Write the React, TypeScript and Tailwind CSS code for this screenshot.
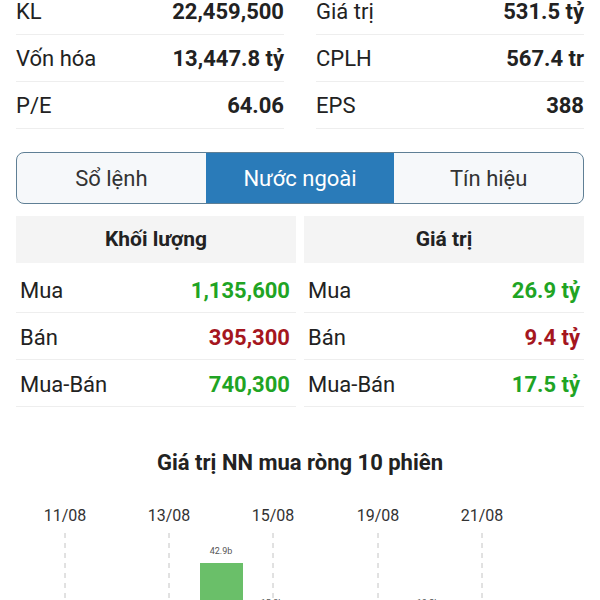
import React from "react";

const stats = [
  ["KL", "22,459,500", "Giá trị", "531.5 tỷ"],
  ["Vốn hóa", "13,447.8 tỷ", "CPLH", "567.4 tr"],
  ["P/E", "64.06", "EPS", "388"],
];

const volRows = [
  { label: "Mua", value: "1,135,600", color: "text-[#1fa424]" },
  { label: "Bán", value: "395,300", color: "text-[#a5161e]" },
  { label: "Mua-Bán", value: "740,300", color: "text-[#1fa424]" },
];

const valRows = [
  { label: "Mua", value: "26.9 tỷ", color: "text-[#1fa424]" },
  { label: "Bán", value: "9.4 tỷ", color: "text-[#a5161e]" },
  { label: "Mua-Bán", value: "17.5 tỷ", color: "text-[#1fa424]" },
];

const StatCell = ({ label, value }: { label: string; value: string }) => (
  <div className="flex h-[47px] items-center justify-between border-b border-[#eeeeee] pt-[2px]">
    <span className="text-[22px] leading-none text-[#222]">{label}</span>
    <span className="text-[22px] font-bold leading-none text-[#222]">{value}</span>
  </div>
);

const ForeignTable = ({
  title,
  rows,
  pr,
}: {
  title: string;
  rows: { label: string; value: string; color: string }[];
  pr: string;
}) => (
  <div className="flex-1">
    <div className="flex h-[47px] items-center justify-center bg-[#f4f4f4] text-[21px] font-bold text-[#222]">
      {title}
    </div>
    <div className="mt-[3px]">
      {rows.map((r) => (
        <div
          key={r.label}
          className={`flex h-[47px] items-center justify-between border-b border-[#eeeeee] pl-1 pt-[4px] ${pr}`}
        >
          <span className="text-[22px] leading-none text-[#222]">{r.label}</span>
          <span className={`text-[22px] font-bold leading-none ${r.color}`}>{r.value}</span>
        </div>
      ))}
    </div>
  </div>
);

const dates = [
  { x: 65, t: "11/08" },
  { x: 169, t: "13/08" },
  { x: 273, t: "15/08" },
  { x: 378, t: "19/08" },
  { x: 482, t: "21/08" },
];

const Chart = () => (
  <svg width="600" height="110" className="block">
    {dates.map((d) => (
      <g key={d.t}>
        <text
          x={d.x}
          y={24}
          textAnchor="middle"
          fontSize="16"
          fill="#333"
          fontFamily="Roboto, sans-serif"
        >
          {d.t}
        </text>
        <line
          x1={d.x}
          y1={36}
          x2={d.x}
          y2={110}
          stroke="#c4c4c4"
          strokeWidth="1"
          strokeDasharray="5 5"
        />
      </g>
    ))}
    <text x={221} y={57} textAnchor="middle" fontSize="9" fill="#555" fontFamily="Roboto, sans-serif">
      42.9b
    </text>
    <rect x={200} y={66} width={43} height={60} fill="#6abf69" />
    <text x={272} y={109} textAnchor="middle" fontSize="9" fill="#555" fontFamily="Roboto, sans-serif">
      15.3b
    </text>
    <text x={428} y={109} textAnchor="middle" fontSize="9" fill="#555" fontFamily="Roboto, sans-serif">
      10.2b
    </text>
  </svg>
);

export default function App() {
  return (
    <div className="h-[600px] w-[600px] overflow-hidden bg-white font-['Roboto',sans-serif]">
      <div className="-mt-[12px]">
        <div className="flex gap-8 px-4">
          <div className="flex-1">
            {stats.map((s) => (
              <StatCell key={s[0]} label={s[0]} value={s[1]} />
            ))}
          </div>
          <div className="flex-1">
            {stats.map((s) => (
              <StatCell key={s[2]} label={s[2]} value={s[3]} />
            ))}
          </div>
        </div>

        <div className="mx-4 mt-[23px] flex h-[52px] overflow-hidden rounded-lg border border-[#5f7f95] bg-[#f6f8fa]">
          <div className="flex flex-1 items-center justify-center text-[22px] text-[#333]">Sổ lệnh</div>
          <div className="flex flex-1 items-center justify-center bg-[#2a7bb9] text-[22px] text-white">
            Nước ngoài
          </div>
          <div className="flex flex-1 items-center justify-center text-[22px] text-[#333]">Tín hiệu</div>
        </div>

        <div className="mt-[12px] flex gap-2 px-4">
          <ForeignTable title="Khối lượng" rows={volRows} pr="pr-[6px]" />
          <ForeignTable title="Giá trị" rows={valRows} pr="pr-1" />
        </div>

        <div className="mt-[39px] text-center text-[22px] font-bold text-[#222]">
          Giá trị NN mua ròng 10 phiên
        </div>
        <div className="mt-[18px]">
          <Chart />
        </div>
      </div>
    </div>
  );
}
